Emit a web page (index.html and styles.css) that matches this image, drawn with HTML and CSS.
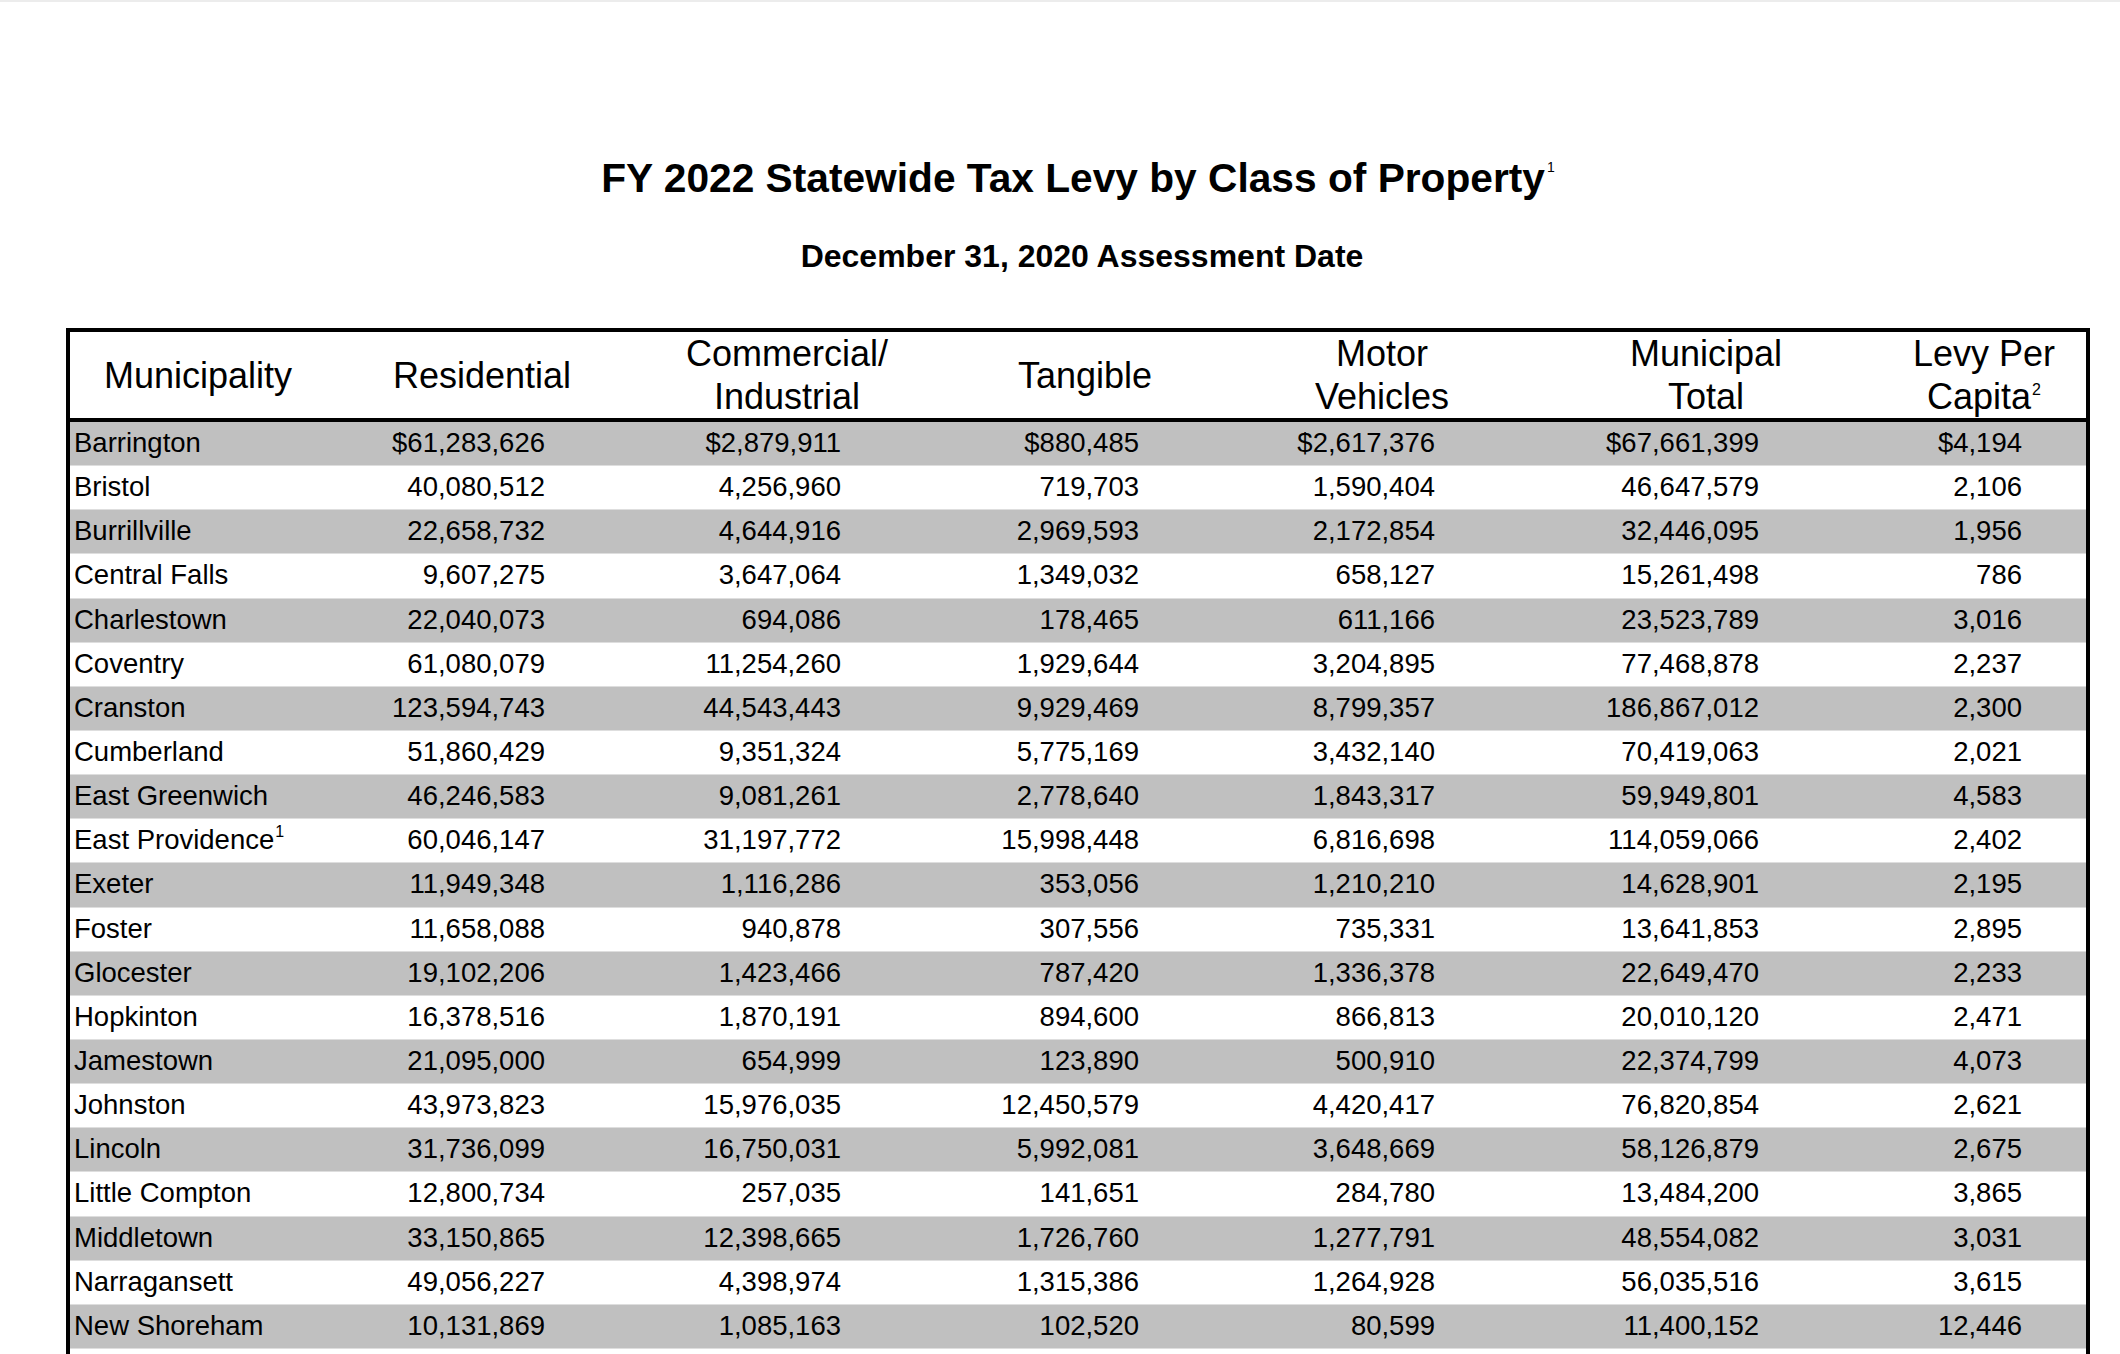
FILE: index.html
```html
<!DOCTYPE html>
<html>
<head>
<meta charset="utf-8">
<title>FY 2022 Statewide Tax Levy by Class of Property</title>
<link rel="stylesheet" href="styles.css">
</head>
<body>
<div class="page">
  <h1 class="title">FY 2022 Statewide Tax Levy by Class of Property<sup class="tsup">1</sup></h1>
  <h2 class="subtitle">December 31, 2020 Assessment Date</h2>
  <div class="sheet">
    <div class="row head">
      <div class="hc">Municipality</div>
      <div class="hc">Residential</div>
      <div class="hc">Commercial/<br>Industrial</div>
      <div class="hc">Tangible</div>
      <div class="hc">Motor<br>Vehicles</div>
      <div class="hc">Municipal<br>Total</div>
      <div class="hc">Levy Per<br>Capita<sup class="hsup">2</sup></div>
    </div>
    <div class="row data band"><div class="name">Barrington</div><div class="num">$61,283,626</div><div class="num">$2,879,911</div><div class="num">$880,485</div><div class="num">$2,617,376</div><div class="num">$67,661,399</div><div class="num">$4,194</div></div>
    <div class="row data"><div class="name">Bristol</div><div class="num">40,080,512</div><div class="num">4,256,960</div><div class="num">719,703</div><div class="num">1,590,404</div><div class="num">46,647,579</div><div class="num">2,106</div></div>
    <div class="row data band"><div class="name">Burrillville</div><div class="num">22,658,732</div><div class="num">4,644,916</div><div class="num">2,969,593</div><div class="num">2,172,854</div><div class="num">32,446,095</div><div class="num">1,956</div></div>
    <div class="row data"><div class="name">Central Falls</div><div class="num">9,607,275</div><div class="num">3,647,064</div><div class="num">1,349,032</div><div class="num">658,127</div><div class="num">15,261,498</div><div class="num">786</div></div>
    <div class="row data band"><div class="name">Charlestown</div><div class="num">22,040,073</div><div class="num">694,086</div><div class="num">178,465</div><div class="num">611,166</div><div class="num">23,523,789</div><div class="num">3,016</div></div>
    <div class="row data"><div class="name">Coventry</div><div class="num">61,080,079</div><div class="num">11,254,260</div><div class="num">1,929,644</div><div class="num">3,204,895</div><div class="num">77,468,878</div><div class="num">2,237</div></div>
    <div class="row data band"><div class="name">Cranston</div><div class="num">123,594,743</div><div class="num">44,543,443</div><div class="num">9,929,469</div><div class="num">8,799,357</div><div class="num">186,867,012</div><div class="num">2,300</div></div>
    <div class="row data"><div class="name">Cumberland</div><div class="num">51,860,429</div><div class="num">9,351,324</div><div class="num">5,775,169</div><div class="num">3,432,140</div><div class="num">70,419,063</div><div class="num">2,021</div></div>
    <div class="row data band"><div class="name">East Greenwich</div><div class="num">46,246,583</div><div class="num">9,081,261</div><div class="num">2,778,640</div><div class="num">1,843,317</div><div class="num">59,949,801</div><div class="num">4,583</div></div>
    <div class="row data"><div class="name">East Providence<sup class="nsup">1</sup></div><div class="num">60,046,147</div><div class="num">31,197,772</div><div class="num">15,998,448</div><div class="num">6,816,698</div><div class="num">114,059,066</div><div class="num">2,402</div></div>
    <div class="row data band"><div class="name">Exeter</div><div class="num">11,949,348</div><div class="num">1,116,286</div><div class="num">353,056</div><div class="num">1,210,210</div><div class="num">14,628,901</div><div class="num">2,195</div></div>
    <div class="row data"><div class="name">Foster</div><div class="num">11,658,088</div><div class="num">940,878</div><div class="num">307,556</div><div class="num">735,331</div><div class="num">13,641,853</div><div class="num">2,895</div></div>
    <div class="row data band"><div class="name">Glocester</div><div class="num">19,102,206</div><div class="num">1,423,466</div><div class="num">787,420</div><div class="num">1,336,378</div><div class="num">22,649,470</div><div class="num">2,233</div></div>
    <div class="row data"><div class="name">Hopkinton</div><div class="num">16,378,516</div><div class="num">1,870,191</div><div class="num">894,600</div><div class="num">866,813</div><div class="num">20,010,120</div><div class="num">2,471</div></div>
    <div class="row data band"><div class="name">Jamestown</div><div class="num">21,095,000</div><div class="num">654,999</div><div class="num">123,890</div><div class="num">500,910</div><div class="num">22,374,799</div><div class="num">4,073</div></div>
    <div class="row data"><div class="name">Johnston</div><div class="num">43,973,823</div><div class="num">15,976,035</div><div class="num">12,450,579</div><div class="num">4,420,417</div><div class="num">76,820,854</div><div class="num">2,621</div></div>
    <div class="row data band"><div class="name">Lincoln</div><div class="num">31,736,099</div><div class="num">16,750,031</div><div class="num">5,992,081</div><div class="num">3,648,669</div><div class="num">58,126,879</div><div class="num">2,675</div></div>
    <div class="row data"><div class="name">Little Compton</div><div class="num">12,800,734</div><div class="num">257,035</div><div class="num">141,651</div><div class="num">284,780</div><div class="num">13,484,200</div><div class="num">3,865</div></div>
    <div class="row data band"><div class="name">Middletown</div><div class="num">33,150,865</div><div class="num">12,398,665</div><div class="num">1,726,760</div><div class="num">1,277,791</div><div class="num">48,554,082</div><div class="num">3,031</div></div>
    <div class="row data"><div class="name">Narragansett</div><div class="num">49,056,227</div><div class="num">4,398,974</div><div class="num">1,315,386</div><div class="num">1,264,928</div><div class="num">56,035,516</div><div class="num">3,615</div></div>
    <div class="row data band"><div class="name">New Shoreham</div><div class="num">10,131,869</div><div class="num">1,085,163</div><div class="num">102,520</div><div class="num">80,599</div><div class="num">11,400,152</div><div class="num">12,446</div></div>
    <div class="row data"><div class="name"></div><div class="num"></div><div class="num"></div><div class="num"></div><div class="num"></div><div class="num"></div><div class="num"></div></div>
  </div>
</div>
</body>
</html>
```
FILE: styles.css
```css
html, body {
  margin: 0;
  padding: 0;
  background: #ffffff;
}
body {
  font-family: "Liberation Sans", Arial, sans-serif;
  color: #000;
  border-top: 2px solid #ececec;
}
.page {
  width: 2024px;
  margin-left: 66px;
  padding-top: 152px;
}
.title {
  margin: 0;
  font-size: 40.7px;
  line-height: 48px;
  font-weight: bold;
  text-align: center;
}
.tsup {
  font-size: 14px;
  font-weight: normal;
  vertical-align: 20px;
  line-height: 0;
  margin-left: 2px;
}
.subtitle {
  margin: 34px 0 0 8px;
  font-size: 32px;
  line-height: 40px;
  font-weight: bold;
  text-align: center;
}
.sheet {
  margin-top: 52px;
  border: 4px solid #000;
  border-bottom: none;
}
.row {
  display: grid;
  grid-template-columns: 256px 312px 298px 298px 296px 352px 204px;
  align-items: center;
}
.head {
  height: 86px;
  border-bottom: 4px solid #000;
  font-size: 36px;
  line-height: 43px;
}
.hc {
  text-align: center;
}
.hsup {
  font-size: 16px;
  vertical-align: 14px;
  line-height: 0;
  margin-left: 1px;
}
.data {
  box-sizing: border-box;
  height: 44.15px;
  padding-bottom: 2px;
  font-size: 27.5px;
  line-height: 32px;
  background: #ffffff;
  box-shadow: inset 0 -1px 0 #dedede;
}
.data.band {
  background: #c0c0c0;
}
.name {
  padding-left: 4px;
  white-space: nowrap;
}
.nsup {
  font-size: 16px;
  vertical-align: 12px;
  line-height: 0;
  margin-left: 1px;
}
.num {
  text-align: right;
  white-space: nowrap;
}
.num:nth-child(2) { padding-right: 93px; }
.num:nth-child(3) { padding-right: 95px; }
.num:nth-child(4) { padding-right: 95px; }
.num:nth-child(5) { padding-right: 95px; }
.num:nth-child(6) { padding-right: 123px; }
.num:nth-child(7) { padding-right: 64px; }
```
